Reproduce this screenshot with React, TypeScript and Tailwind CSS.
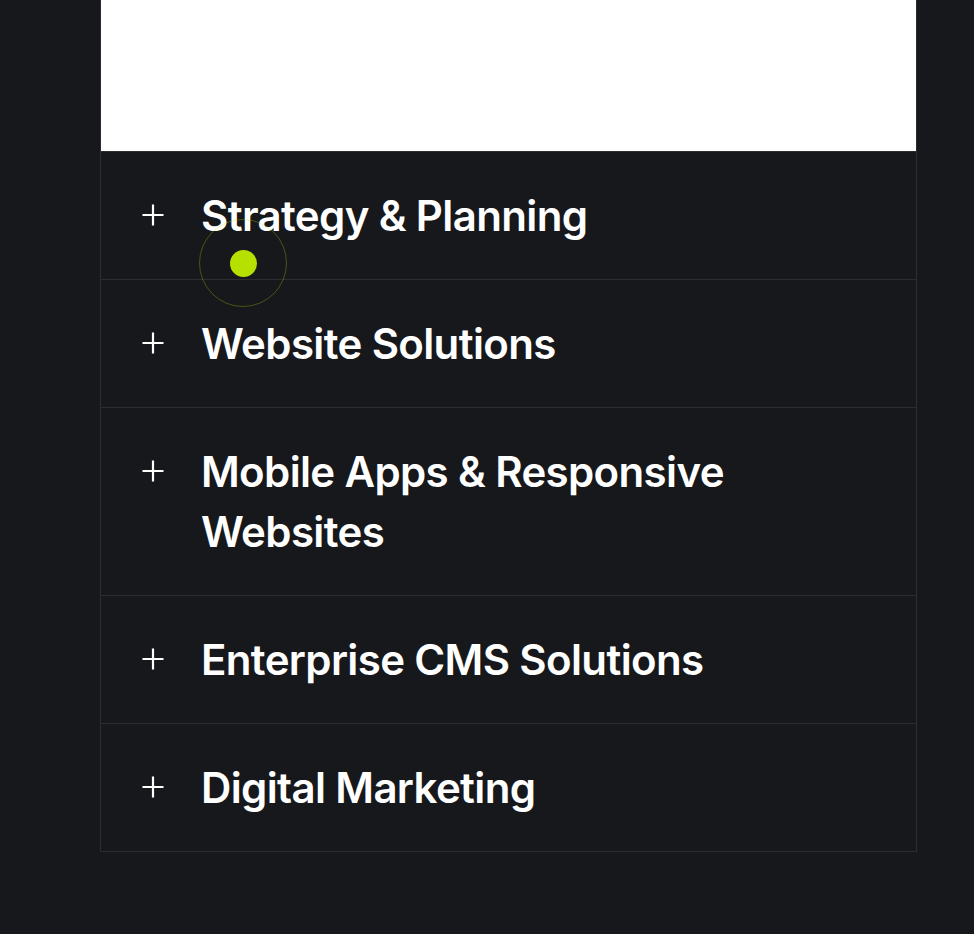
import React from "react";

const items = [
  "Strategy & Planning",
  "Website Solutions",
  "Mobile Apps & Responsive Websites",
  "Enterprise CMS Solutions",
  "Digital Marketing",
];

function Plus() {
  return (
    <svg width="24" height="24" viewBox="0 0 24 24" className="shrink-0" fill="none">
      <path d="M12 1.5v21M1.5 12h21" stroke="white" strokeWidth="2.2" />
    </svg>
  );
}

export default function App() {
  return (
    <div
      className="min-h-[934px] w-full bg-[#17181c] relative"
      style={{ fontFamily: "Inter, 'Noto Sans', sans-serif" }}
    >
      <div className="ml-[100px] w-[817px] border-x border-b border-[#2c2d31]">
        <div className="h-[151px] bg-white" />
        {items.map((t) => (
          <div
            key={t}
            className="flex items-start pl-[40px] pr-[40px] py-[33.5px] border-t border-[#2c2d31]"
          >
            <div className="h-[60px] flex items-center w-[60px] -mt-[1px]">
              <Plus />
            </div>
            <div className="text-white text-[42px] leading-[60px] font-semibold tracking-[-0.015em] max-w-[560px]">
              {t}
            </div>
          </div>
        ))}
      </div>
      <div className="absolute left-[199px] top-[219px] w-[88px] h-[88px] rounded-full border border-[#b5e000]/30 flex items-center justify-center">
        <div className="w-[27px] h-[27px] rounded-full bg-[#b5e000]" />
      </div>
    </div>
  );
}
